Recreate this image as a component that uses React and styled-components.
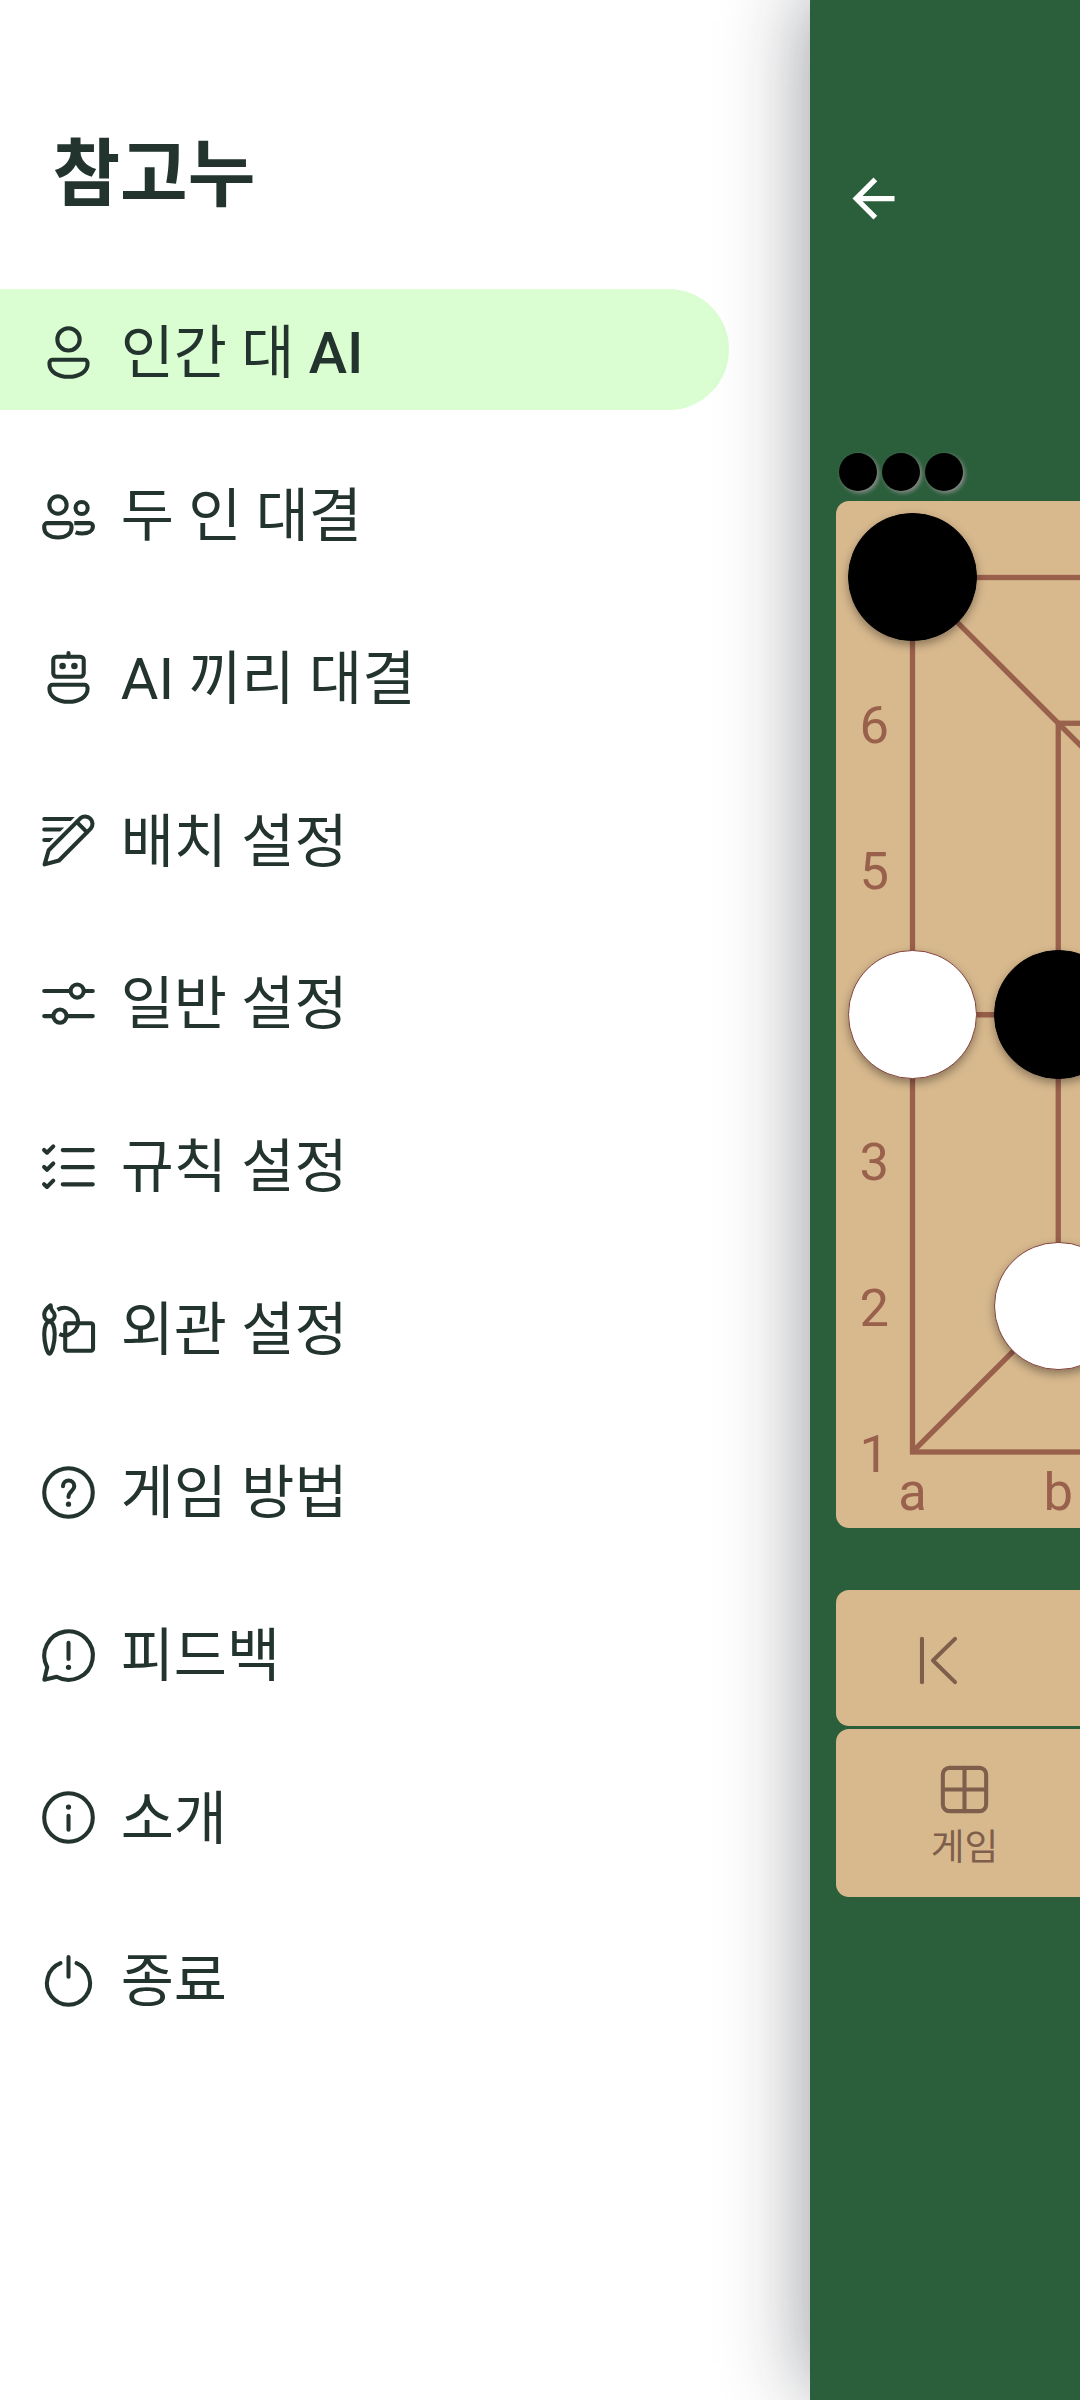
import React from 'react';
import styled, { createGlobalStyle } from 'styled-components';

const GlobalStyle = createGlobalStyle`
  * { box-sizing: border-box; }
  body {
    margin: 0;
    background: #fff;
    font-family: Roboto, 'Noto Sans CJK KR', sans-serif;
  }
`;

const ink = '#23342e';
const wood = '#d8b98e';
const lineColor = '#99604c';
const toolColor = '#7f5f4b';

const Screen = styled.div`
  display: flex;
  width: 1080px;
  height: 2400px;
  overflow: hidden;
  background: #fff;
`;

const Drawer = styled.nav`
  flex: none;
  width: 810px;
  padding-top: 122px;
  color: ${ink};
`;

const Title = styled.h1`
  margin: 0;
  padding-left: 52.5px;
  height: 167px;
  font-size: 73.5px;
  line-height: 106px;
  font-weight: 700;
`;

const Menu = styled.ul`
  display: flex;
  flex-direction: column;
  gap: 42.1px;
  margin: 0;
  padding: 0;
  list-style: none;
`;

const MenuItem = styled.li`
  display: flex;
  align-items: center;
  gap: 21.2px;
  width: 729px;
  height: 120.75px;
  padding: 5.8px 0 0 36.55px;
  border-radius: 0 61px 61px 0;
  background: ${(p) => (p.$active ? '#dafdd2' : 'transparent')};
  font-weight: ${(p) => (p.$active ? 500 : 400)};
`;

const Label = styled.span`
  padding-top: 1.4px;
  font-size: 57.75px;
  line-height: 84px;
  white-space: nowrap;
`;

const Hangul = styled.span`
  font-weight: 400;
`;

const Glyph = styled.svg`
  display: block;
  flex: none;
  width: 63px;
  height: 63px;
  fill: none;
  stroke: currentColor;
  stroke-width: 1.55;
  stroke-linecap: round;
  stroke-linejoin: round;
`;

const GamePane = styled.main`
  flex: none;
  display: flex;
  flex-direction: column;
  width: 1080px;
  padding: 167.3px 26px 0;
  background: #2b5e3b;
  box-shadow: 0 -8px 80px rgba(20, 24, 34, 0.46);
`;

const Header = styled.header`
  height: 285.7px;
  padding-left: 5.5px;
  color: #fff;
`;

const Captured = styled.div`
  display: flex;
  gap: 5.3px;
  height: 47.7px;
  padding-left: 2.8px;
`;

const CapturedStone = styled.span`
  width: 38px;
  height: 38px;
  border-radius: 50%;
  background: #000;
  box-shadow: 2px 2px 4px #8c8c8c;
`;

const Board = styled.section`
  position: relative;
  height: 1027.8px;
  border-radius: 13px;
  background: ${wood};
`;

const BoardLines = styled.svg`
  display: block;
  width: 1028px;
  height: 1027.8px;
  fill: none;
  stroke: ${lineColor};
  stroke-width: 5.3;

  text {
    fill: ${lineColor};
    stroke: none;
    font-size: 52.5px;
    text-anchor: middle;
  }
`;

const Stone = styled.span`
  position: absolute;
  left: ${(p) => 76.6 + p.$col * 145.75 - 64.25}px;
  top: ${(p) => 76.5 + p.$row * 145.75 - 64.25}px;
  width: 128.5px;
  height: 128.5px;
  border-radius: 50%;
  background: ${(p) => (p.$white ? '#fff' : '#000')};
  border: 1px solid ${(p) => (p.$white ? '#86433b' : '#000')};
  box-shadow: 0 4px 10px rgba(0, 0, 0, 0.36);
`;

const Toolbar = styled.div`
  display: flex;
  height: ${(p) => p.$height}px;
  margin-top: ${(p) => p.$gap}px;
  border-radius: 13px;
  background: ${wood};
  color: ${toolColor};
`;

const ToolButton = styled.div`
  flex: 1;
  display: flex;
  flex-direction: column;
  align-items: center;
  padding-top: ${(p) => p.$top}px;
  font-size: 36.75px;
  line-height: 54px;
`;

const Dot = ({ x, y, r = 1 }) => <circle cx={x} cy={y} r={r} fill="currentColor" stroke="none" />;

const torso = 'M5.9 14.75h12.2a1.15 1.15 0 0 1 1.15 1.15v.6c0 2.9-3.4 4.75-7.25 4.75s-7.25-1.85-7.25-4.75v-.6a1.15 1.15 0 0 1 1.15-1.15z';

const icons = {
  person: (
    <>
      <circle cx="12" cy="7" r="4.25" />
      <path d={torso} />
    </>
  ),
  people: (
    <>
      <circle cx="8" cy="8" r="3.3" />
      <circle cx="17" cy="9.15" r="2.3" />
      <path d="M4 14.9h8a1.15 1.15 0 0 1 1.15 1.15v.6c0 2.3-2.1 3.7-5.15 3.7s-5.25-1.4-5.25-3.7v-.6A1.15 1.15 0 0 1 4 14.9z" />
      <path strokeLinecap="butt" d="M14.2 14.9h5.9a1.2 1.2 0 0 1 1.2 1.2c0 1.7-1.7 2.75-4 2.75-.9 0-1.7-.1-2.6-.45" />
    </>
  ),
  bot: (
    <>
      <path d="M12 2.7v1.4" />
      <rect x="6.2" y="4.1" width="11.6" height="7.6" rx="1.3" />
      <Dot x={9.75} y={7.65} r={1.25} />
      <Dot x={14.25} y={7.65} r={1.25} />
      <path d={torso} />
    </>
  ),
  edit: (
    <>
      <path d="M2.9 21.1 4.45 15.7 16.5 3.55a2.8 2.8 0 0 1 3.95 3.95L8.4 19.6z" />
      <path d="M15.2 5l3.8 3.8" />
      <path
        fill="currentColor"
        stroke="none"
        d="M2.75 3.05h11.6l-1.5 1.5H2.75a.75.75 0 0 1 0-1.5zM2.75 7.05h7.6l-1.5 1.5h-6.1a.75.75 0 0 1 0-1.5zM2.75 11.05h3.6l-1.5 1.5h-2.1a.75.75 0 0 1 0-1.5z"
      />
    </>
  ),
  sliders: (
    <>
      <path d="M2.75 7.25h9.9M17.9 7.25h3.35M2.75 16.8h3.4M11.4 16.8h9.85" />
      <circle cx="15.3" cy="7.25" r="2.5" />
      <circle cx="8.75" cy="16.8" r="2.5" />
    </>
  ),
  checklist: (
    <>
      <path d="M9.8 5.75h11.45M9.8 12.25h11.45M9.8 18.8h11.45" />
      <path d="M2.7 5.7l1.1 1.05 2.4-2.4M2.7 12.2l1.1 1.05 2.4-2.4M2.7 18.75l1.1 1.05 2.4-2.4" />
    </>
  ),
  appearance: (
    <>
      <path d="M5.2 2.75C3.6 3.9 2.75 5.2 2.75 6.4c0 1.4.9 2.3 2 2.3s2-.9 2-2.1c0-.8-.4-1.2-.9-1.7-.5-.6-.65-1.2-.65-2.15z" />
      <path d="M4.75 9c-1.2 0-2 2-2 4.6 0 3.6 1.1 7.6 2 7.6s2-4 2-7.6c0-2.6-.8-4.6-2-4.6z" />
      <path strokeLinecap="butt" d="M7.8 4.5A5.2 5.2 0 1 1 8.5 13.8" />
      <rect x="10.75" y="9.6" width="10.6" height="10.5" rx=".8" />
    </>
  ),
  help: (
    <>
      <circle cx="12" cy="12" r="9.25" />
      <path d="M9.9 9.6a2.15 2.15 0 1 1 4.3 0c0 1.8-2.2 2-2.2 4.1" />
      <Dot x={12} y={16.45} />
    </>
  ),
  feedback: (
    <>
      <path d="M7.5 20.1A9.25 9.25 0 1 0 3.9 16.45L2.8 21.2z" />
      <path d="M12 7.2v6.1" />
      <Dot x={12} y={16.5} />
    </>
  ),
  info: (
    <>
      <circle cx="12" cy="12" r="9.25" />
      <Dot x={12} y={8} />
      <path d="M12 11.3v5.4" />
    </>
  ),
  power: (
    <>
      <path d="M12 3.05v7.5" />
      <path d="M8.95 5.4a8.2 8.2 0 1 0 6.1 0" />
    </>
  ),
  first: (
    <>
      <path d="M5.7 3.75v16.5" />
      <path d="M18.3 3.75L9.9 12l8.4 8.25" />
    </>
  ),
  grid: (
    <>
      <rect x="3.75" y="3.75" width="16.5" height="16.5" rx="2.5" />
      <path d="M12 3.75v16.5M3.75 12h16.5" />
    </>
  ),
  back: <path fill="currentColor" stroke="none" d="M20 11H7.83l5.59-5.59L12 4l-8 8 8 8 1.41-1.41L7.83 13H20v-2z" />,
};

const Icon = ({ name }) => (
  <Glyph viewBox="0 0 24 24" aria-hidden="true">
    {icons[name]}
  </Glyph>
);

const menu = [
  { icon: 'person', label: <><Hangul>인간 대 </Hangul>AI</>, active: true },
  { icon: 'people', label: '두 인 대결' },
  { icon: 'bot', label: 'AI 끼리 대결' },
  { icon: 'edit', label: '배치 설정' },
  { icon: 'sliders', label: '일반 설정' },
  { icon: 'checklist', label: '규칙 설정' },
  { icon: 'appearance', label: '외관 설정' },
  { icon: 'help', label: '게임 방법' },
  { icon: 'feedback', label: '피드백' },
  { icon: 'info', label: '소개' },
  { icon: 'power', label: '종료' },
];

const at = (n) => 76.5 + n * 145.75;

const rings = [0, 1, 2];
const ranks = [
  ['6', 1],
  ['5', 2],
  ['3', 4],
  ['2', 5],
  ['1', 6],
];

export default function App() {
  return (
    <>
      <GlobalStyle />
      <Screen>
        <Drawer>
          <Title>참고누</Title>
          <Menu>
            {menu.map((item) => (
              <MenuItem key={item.icon} $active={item.active}>
                <Icon name={item.icon} />
                <Label>{item.label}</Label>
              </MenuItem>
            ))}
          </Menu>
        </Drawer>
        <GamePane>
          <Header>
            <Icon name="back" />
          </Header>
          <Captured>
            <CapturedStone />
            <CapturedStone />
            <CapturedStone />
          </Captured>
          <Board>
            <BoardLines viewBox="0 0 1028 1027.8">
              {rings.map((r) => (
                <rect key={r} x={at(r)} y={at(r)} width={(6 - 2 * r) * 145.75} height={(6 - 2 * r) * 145.75} />
              ))}
              <path d={`M${at(0)} ${at(3)}H${at(2)}M${at(4)} ${at(3)}H${at(6)}M${at(3)} ${at(0)}V${at(2)}M${at(3)} ${at(4)}V${at(6)}`} />
              <path d={`M${at(0)} ${at(0)}L${at(2)} ${at(2)}M${at(0)} ${at(6)}L${at(2)} ${at(4)}`} />
              {ranks.map(([name, row]) => (
                <text key={name} x="38.2" y={at(row) + 19.8}>{name}</text>
              ))}
              <text x={at(0)} y="1009.2">a</text>
              <text x={at(1)} y="1009.2">b</text>
            </BoardLines>
            <Stone $col={0} $row={0} />
            <Stone $col={0} $row={3} $white />
            <Stone $col={1} $row={3} />
            <Stone $col={1} $row={5} $white />
          </Board>
          <Toolbar $height={136.3} $gap={61.5}>
            <ToolButton $top={39}>
              <Icon name="first" />
            </ToolButton>
            <ToolButton />
            <ToolButton />
            <ToolButton />
            <ToolButton />
          </Toolbar>
          <Toolbar $height={168} $gap={2.7}>
            <ToolButton $top={28.8}>
              <Icon name="grid" />
              <span>게임</span>
            </ToolButton>
            <ToolButton />
            <ToolButton />
            <ToolButton />
          </Toolbar>
        </GamePane>
      </Screen>
    </>
  );
}
